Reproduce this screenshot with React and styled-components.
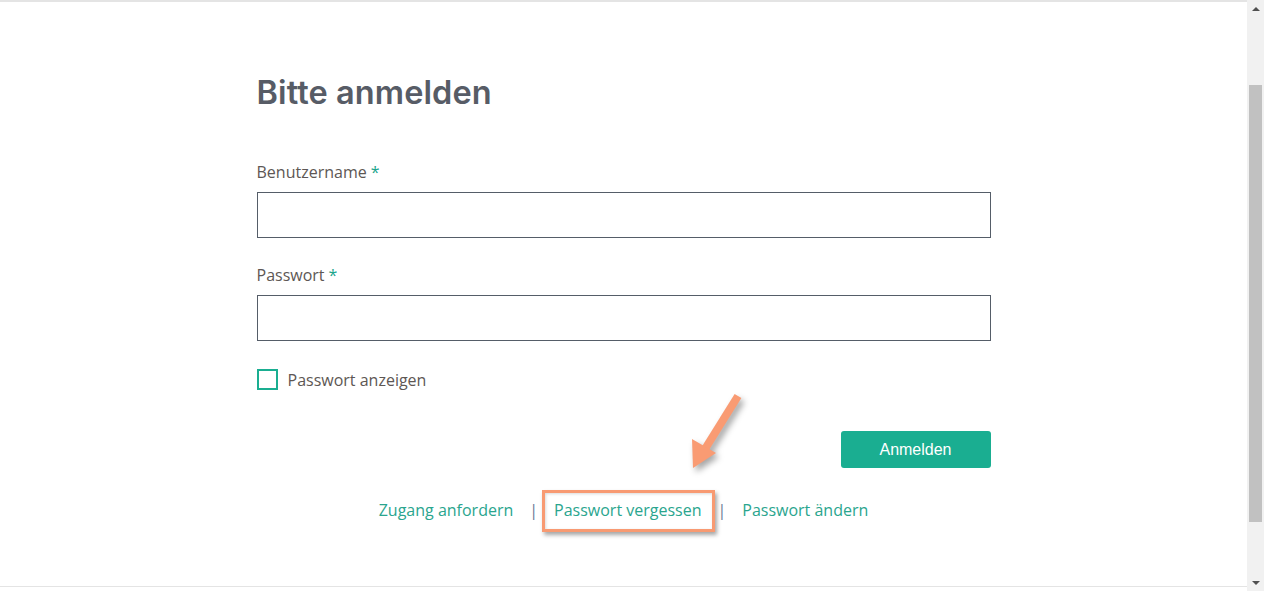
import React, { useState } from "react";
import styled, { createGlobalStyle } from "styled-components";

const GlobalStyle = createGlobalStyle`
  html, body {
    margin: 0;
    padding: 0;
    overflow: hidden;
    background: #ffffff;
  }
  * {
    box-sizing: border-box;
  }
`;

const Frame = styled.div`
  width: 1264px;
  height: 591px;
  display: flex;
  background: #ffffff;
`;

const Viewport = styled.div`
  flex: 1;
  height: 587px;
  border-top: 2px solid #e4e4e4;
  border-bottom: 1px solid #e4e4e4;
  position: relative;
`;

const Scrollbar = styled.div`
  width: 17px;
  height: 591px;
  background: #f1f1f1;
  display: flex;
  flex-direction: column;
  align-items: center;
`;

const ScrollArrow = styled.div`
  width: 17px;
  height: 17px;
  display: flex;
  align-items: center;
  justify-content: center;
`;

const Triangle = styled.div`
  width: 0;
  height: 0;
  border-left: 4px solid transparent;
  border-right: 4px solid transparent;
  ${(p) =>
    p.down
      ? "border-top: 4px solid #505050;"
      : "border-bottom: 4px solid #505050;"}
`;

const Track = styled.div`
  flex: 1;
  width: 100%;
  display: flex;
  justify-content: center;
`;

const Thumb = styled.div`
  width: 13px;
  height: 437px;
  margin-top: 68px;
  background: #c1c1c1;
`;

const Form = styled.div`
  width: 734px;
  margin: 0 auto;
  padding-top: 71px;
  display: flex;
  flex-direction: column;
  font-family: "Open Sans", "Liberation Sans", sans-serif;
`;

const Title = styled.h1`
  margin: 0;
  font-family: Inter, "Liberation Sans", sans-serif;
  font-size: 32.5px;
  line-height: 40px;
  font-weight: 600;
  color: #575c66;
  letter-spacing: 0.1px;
`;

const Label = styled.label`
  display: block;
  margin-top: ${(p) => p.top}px;
  font-size: 16px;
  line-height: 24px;
  color: #5d5754;
`;

const Star = styled.span`
  color: #1aa58c;
  margin-left: 4px;
`;

const Input = styled.input`
  display: block;
  width: 100%;
  height: 46px;
  margin-top: 8px;
  border: 1px solid #555d68;
  border-radius: 0;
  padding: 0 12px;
  font-size: 16px;
  font-family: inherit;
  outline: none;
`;

const CheckRow = styled.div`
  display: flex;
  align-items: center;
  gap: 10px;
  margin-top: 28px;
  height: 21px;
  font-size: 16px;
  color: #5d5754;
  cursor: pointer;
`;

const Box = styled.div`
  flex-shrink: 0;
  width: 21px;
  height: 21px;
  border: 2px solid #1aae91;
  background: ${(p) => (p.$checked ? "#1aae91" : "#ffffff")};
`;

const ButtonRow = styled.div`
  display: flex;
  justify-content: flex-end;
  margin-top: 41px;
`;

const Button = styled.button`
  width: 150px;
  height: 37px;
  border: none;
  border-radius: 3px;
  background: #1aae91;
  color: #ffffff;
  font-family: "Liberation Sans", Arial, sans-serif;
  font-size: 16px;
  cursor: pointer;
`;

const Links = styled.div`
  display: flex;
  justify-content: center;
  align-items: center;
  margin-top: 30px;
  font-size: 16px;
  line-height: 24px;
`;

const Link = styled.a`
  color: #2aa58e;
  text-decoration: none;
  position: relative;
`;

const Sep = styled.span`
  color: #6b7896;
  margin: 0 16px;
`;

const Highlight = styled.span`
  position: absolute;
  left: -12px;
  right: -14px;
  top: -8px;
  bottom: -10px;
  border: 3px solid #f89a72;
  box-shadow: 2px 3px 4px rgba(0, 0, 0, 0.35), inset 1px 1px 3px rgba(0, 0, 0, 0.15);
  pointer-events: none;
`;

const Arrow = styled.svg`
  position: absolute;
  left: 680px;
  top: 385px;
  overflow: visible;
  filter: drop-shadow(3px 4px 3px rgba(0, 0, 0, 0.35));
`;

const App = () => {
  const [show, setShow] = useState(false);

  return (
    <>
      <GlobalStyle />
      <Frame>
        <Viewport>
          <Form>
            <Title>Bitte anmelden</Title>

            <Label top={47}>
              Benutzername<Star>*</Star>
            </Label>
            <Input type="text" />

            <Label top={25}>
              Passwort<Star>*</Star>
            </Label>
            <Input type={show ? "text" : "password"} />

            <CheckRow onClick={() => setShow((s) => !s)}>
              <Box $checked={show} />
              Passwort anzeigen
            </CheckRow>

            <ButtonRow>
              <Button>Anmelden</Button>
            </ButtonRow>

            <Links>
              <Link href="#">Zugang anfordern</Link>
              <Sep>|</Sep>
              <Link href="#">
                Passwort vergessen
                <Highlight />
              </Link>
              <Sep>|</Sep>
              <Link href="#">Passwort ändern</Link>
            </Links>
          </Form>

          {/* annotation arrow */}
          <Arrow width="70" height="90" viewBox="0 0 70 90">
            <line x1="58" y1="9" x2="25" y2="62" stroke="#f99b73" strokeWidth="8" />
            <polygon points="13,81 12,52 36,66" fill="#f99b73" />
          </Arrow>
        </Viewport>

        <Scrollbar>
          <ScrollArrow>
            <Triangle />
          </ScrollArrow>
          <Track>
            <Thumb />
          </Track>
          <ScrollArrow>
            <Triangle down />
          </ScrollArrow>
        </Scrollbar>
      </Frame>
    </>
  );
};

export default App;
